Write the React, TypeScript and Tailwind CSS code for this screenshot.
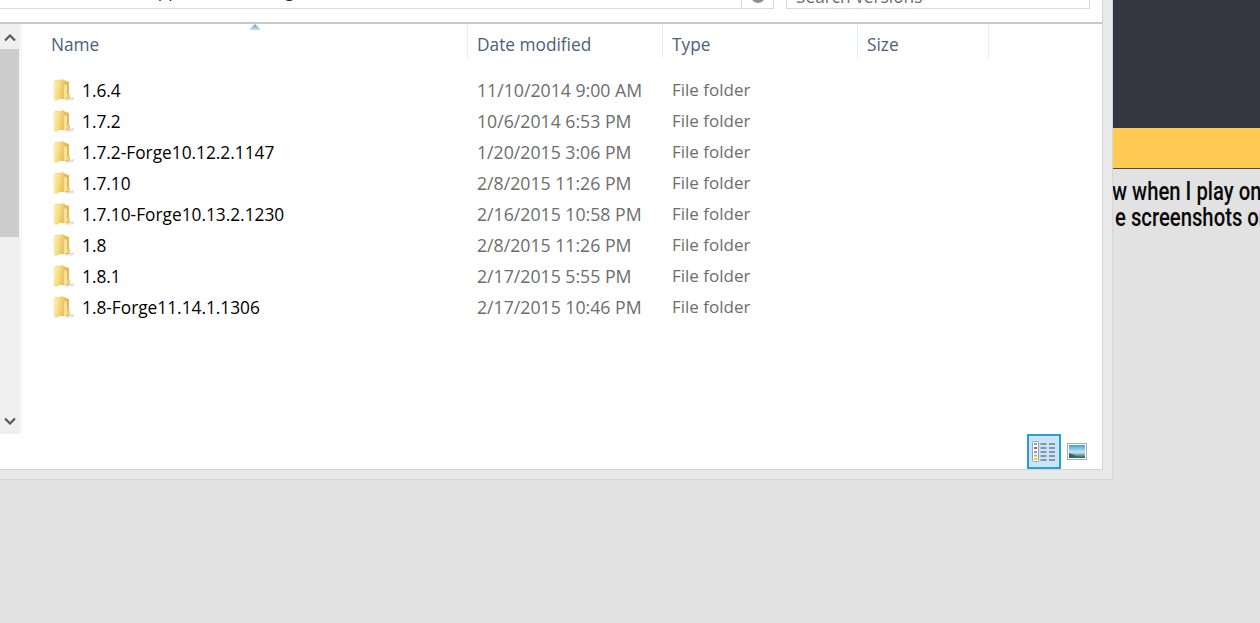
const rows = [
  ["1.6.4", "11/10/2014 9:00 AM"],
  ["1.7.2", "10/6/2014 6:53 PM"],
  ["1.7.2-Forge10.12.2.1147", "1/20/2015 3:06 PM"],
  ["1.7.10", "2/8/2015 11:26 PM"],
  ["1.7.10-Forge10.13.2.1230", "2/16/2015 10:58 PM"],
  ["1.8", "2/8/2015 11:26 PM"],
  ["1.8.1", "2/17/2015 5:55 PM"],
  ["1.8-Forge11.14.1.1306", "2/17/2015 10:46 PM"],
];

function Folder() {
  return (
    <svg width="24" height="24" viewBox="0 0 24 24" className="shrink-0 -mt-[2px]">
      <defs>
        <linearGradient id="fb" x1="0" x2="1" y1="0" y2="0">
          <stop offset="0" stopColor="#f0d070" />
          <stop offset="1" stopColor="#e2b94e" />
        </linearGradient>
        <linearGradient id="ff" x1="0" x2="1" y1="0" y2="0.300">
          <stop offset="0" stopColor="#fff6c8" />
          <stop offset="0.600" stopColor="#f5dc85" />
          <stop offset="1" stopColor="#e8c560" />
        </linearGradient>
      </defs>
      <path d="M14 20l8-1v3l-9 1z" fill="#cfcfcf" opacity="0.6" />
      <path d="M3 2h9l2 1 3 1v17H4z" fill="url(#fb)" />
      <path d="M1 4l9-3 2 1v17l-8 4-2-1z" fill="url(#ff)" />
      <path d="M12 6l3 1v13l-3 1z" fill="#f7e19a" />
      <path d="M15 16h3v4h-3z" fill="#edcf74" />
    </svg>
  );
}

function HeaderCell({ label, width, first }: { label: string; width: string; first?: boolean }) {
  return (
    <div className={`${width} h-[34px] pt-[8px] shrink-0 border-r border-[#e4edf5] flex items-center text-[#4c607a] ${first ? "pl-[29px]" : "pl-[9px]"}`}>
      {label}
    </div>
  );
}

function DetailsIcon() {
  return (
    <svg width="24" height="22" viewBox="0 0 24 22">
      <rect x="0.500" y="0.500" width="6" height="20" rx="1" fill="#fff" stroke="#9aa3ad" />
      <path d="M2 3h3" stroke="#8aa0c8" strokeWidth="2" />
      <path d="M2 7h3" stroke="#e24a3a" strokeWidth="2" />
      <path d="M2 11h3" stroke="#7a9cd6" strokeWidth="2" />
      <path d="M2 14.500h3" stroke="#9ccc55" strokeWidth="2" />
      <path d="M2 18h3" stroke="#e6cf30" strokeWidth="2" />
      {[3, 7, 11, 15, 19].map((y) => (
        <g key={y}>
          <path d={`M8.500 ${y}h6`} stroke="#5f6c7a" strokeWidth="1.300" />
          <path d={`M17 ${y}h6`} stroke="#5f6c7a" strokeWidth="1.300" />
        </g>
      ))}
    </svg>
  );
}

function PreviewIcon() {
  return (
    <svg width="20" height="17" viewBox="0 0 20 17">
      <defs>
        <linearGradient id="sky" x1="0" x2="0" y1="0" y2="1">
          <stop offset="0" stopColor="#3f9fe0" />
          <stop offset="0.550" stopColor="#c8e8ee" />
          <stop offset="1" stopColor="#1f5a5e" />
        </linearGradient>
      </defs>
      <rect x="0.500" y="0.500" width="19" height="16" fill="#fff" stroke="#9fb0c0" />
      <rect x="2" y="2" width="16" height="13" fill="url(#sky)" />
      <path d="M2 15v-5l5 2 5 3z" fill="#2f6b55" />
    </svg>
  );
}

export default function App() {
  return (
    <div className="h-[623px] w-[1260px] overflow-hidden bg-[#e2e2e2] flex items-start" style={{ fontFamily: '"Open Sans", sans-serif' }}>
      <div className="w-[1113px] h-[480px] shrink-0 bg-[#e9e9e9] border-r border-b border-[#d6d6d6] flex flex-col">
        <div className="w-[1103px] h-[470px] bg-white border-r border-b border-[#d4d4d4] flex flex-col text-[17.300px]">
          <div className="h-[22px] shrink-0 flex items-start">
            <div className="w-[741px] h-[9px] border-b border-[#d9d9d9] overflow-hidden flex flex-col justify-end">
              <div className="pl-[14px] text-[#222] leading-[24px] whitespace-nowrap mb-[5px]">C:\Users\Admin\AppData\Roaming\.minecraft</div>
            </div>
            <div className="w-[33px] h-[9px] border-b border-x border-[#d9d9d9] overflow-hidden flex justify-center items-end">
              <div className="w-[14px] h-[14px] rounded-full border-[3px] border-[#8f8f8f] mb-[5px] shrink-0" />
            </div>
            <div className="ml-[12px] w-[304px] h-[9px] border-b border-x border-[#d9d9d9] overflow-hidden flex flex-col justify-end">
              <div className="pl-[9px] text-[#6d6d6d] leading-[24px] whitespace-nowrap -mb-[1px]">Search versions</div>
            </div>
          </div>
          <div className="flex-1 min-h-0 flex border-t-2 border-[#c9c9c9]">
            <div className="w-[22px] h-[410px] shrink-0 border-r border-[#f3f3f3] flex">
              <div className="w-[20px] h-full bg-[#f0f0f0] flex flex-col">
                <div className="h-[25px] shrink-0 flex items-center justify-center pt-[2px]">
                  <svg width="12" height="8" viewBox="0 0 12 8"><path d="M1 6.500 6 1.500l5 5" fill="none" stroke="#5a5a5a" strokeWidth="2.200" /></svg>
                </div>
                <div className="h-[188px] w-[19px] shrink-0 bg-[#cdcdcd]" />
                <div className="flex-1" />
                <div className="h-[26px] shrink-0 flex items-center justify-center">
                  <svg width="12" height="8" viewBox="0 0 12 8"><path d="M1 1.500 6 6.500l5-5" fill="none" stroke="#5a5a5a" strokeWidth="2.200" /></svg>
                </div>
              </div>
            </div>
            <div className="flex-1 min-w-0 flex flex-col relative">
              <svg width="12" height="6" viewBox="0 0 12 6" className="absolute left-[227px] top-0">
                <defs>
                  <linearGradient id="sort" x1="0" x2="0" y1="0" y2="1">
                    <stop offset="0" stopColor="#5b9bc8" />
                    <stop offset="1" stopColor="#c5e2f5" />
                  </linearGradient>
                </defs>
                <path d="M6 0 12 6H0z" fill="url(#sort)" />
              </svg>
              <div className="flex h-[34px] shrink-0">
                <HeaderCell label="Name" width="w-[446px]" first />
                <HeaderCell label="Date modified" width="w-[195px]" />
                <HeaderCell label="Type" width="w-[195px]" />
                <HeaderCell label="Size" width="w-[131px]" />
              </div>
              <div className="mt-[17px] flex flex-col">
                {rows.map(([name, date]) => (
                  <div key={name} className="flex h-[31px] items-center">
                    <div className="w-[446px] shrink-0 flex items-center pl-[30px] gap-[7px] text-black whitespace-nowrap">
                      <Folder />
                      <span className="-ml-[1px]">{name}</span>
                    </div>
                    <div className="w-[195px] shrink-0 pl-[9px] text-[#6d6d6d] text-[17.700px]">{date}</div>
                    <div className="w-[195px] shrink-0 pl-[9px] pb-[2px] text-[#6d6d6d] text-[17px]">File folder</div>
                  </div>
                ))}
              </div>
              <div className="absolute right-[15px] bottom-0 flex items-center gap-[6px]">
                <div className="w-[34px] h-[35px] bg-[#c9e4f6] border-2 border-[#26a0da] flex items-center justify-center">
                  <DetailsIcon />
                </div>
                <PreviewIcon />
              </div>
            </div>
          </div>
        </div>
      </div>
      <div className="flex-1 min-w-0 overflow-hidden">
        <div className="h-[128px] bg-[#343741]" />
        <div className="h-[41px] bg-[#ffcb52] border-b border-[#4a4a4a]" />
        <div className="pt-[9px] text-[#0a0a0a] whitespace-nowrap text-[26px] leading-[26px] font-medium" style={{ fontFamily: 'Roboto, "Liberation Sans", sans-serif' }}>
          <div className="-ml-[1px] origin-left scale-x-[0.78]">w when I play on Minecraft</div>
          <div className="ml-[2px] origin-left scale-x-[0.78]">e screenshots on this page</div>
        </div>
      </div>
    </div>
  );
}
